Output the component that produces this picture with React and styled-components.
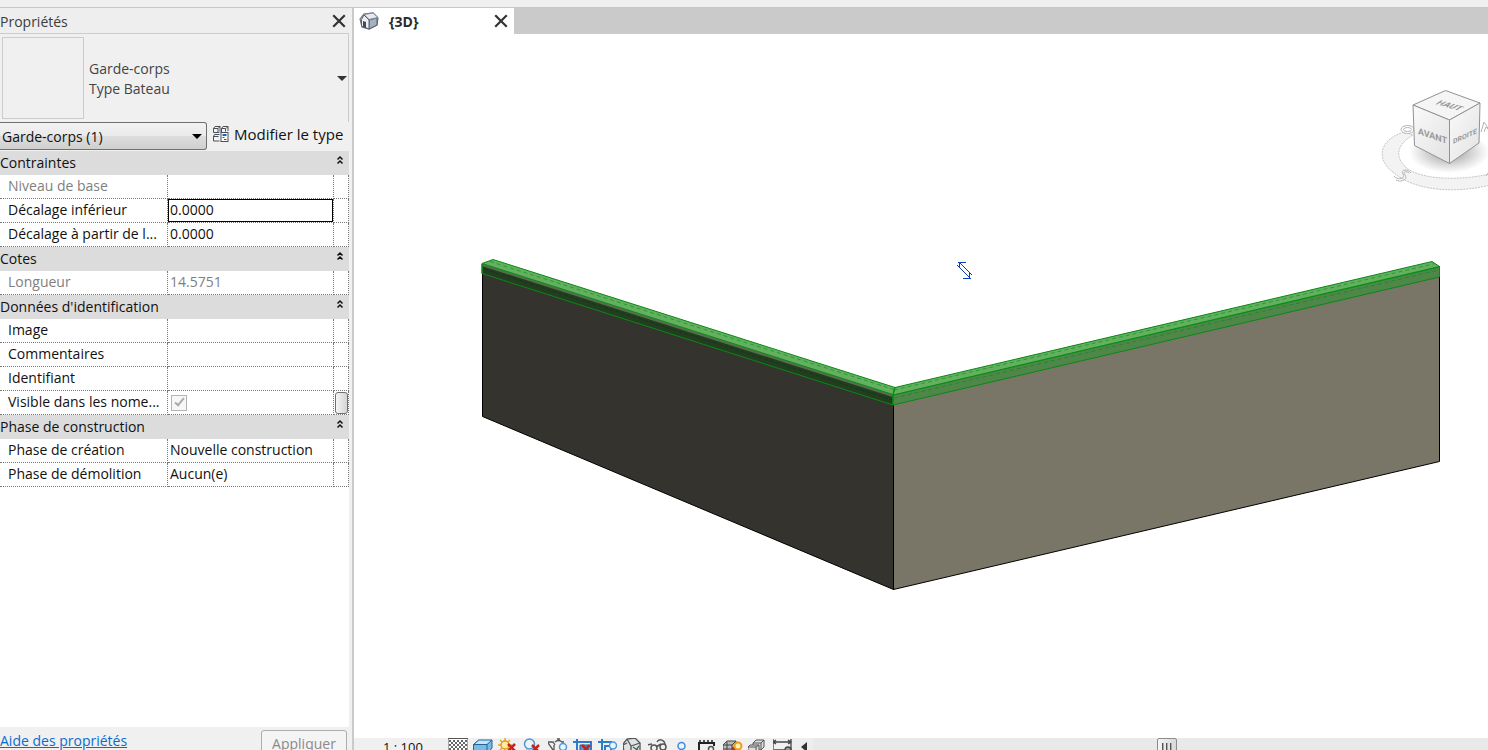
import React from "react";
import styled, { createGlobalStyle } from "styled-components";

const Global = createGlobalStyle`
  *, *::before, *::after { box-sizing: border-box; }
  html, body { margin: 0; height: 100%; overflow: hidden; }
  body { font: 14px/20px "Open Sans", "Noto Sans", sans-serif; color: #111; background: #fff; }
  button, input, select { font: inherit; color: inherit; margin: 0; }
`;

const Shell = styled.div`
  display: flex;
  flex-direction: column;
  height: 100vh;
  overflow: hidden;
`;
const TopStrip = styled.div`
  flex: none;
  height: 8px;
  background: #efefef;
  border-bottom: 1px solid #c8c8c8;
`;
const Workspace = styled.div`
  flex: 1;
  min-height: 0;
  display: flex;
`;

const Panel = styled.aside`
  flex: 0 0 354px;
  display: flex;
  flex-direction: column;
  min-height: 0;
  padding-right: 3px;
  background: #f0f0f0;
  border-right: 2px solid #cacaca;
`;
const PanelHeader = styled.header`
  flex: none;
  display: flex;
  align-items: center;
  justify-content: space-between;
  height: 26px;
  padding-right: 3px;
  background: #eeeeee;
  border-bottom: 1px solid #cccccc;
`;
const PanelTitle = styled.h2`
  margin: 0;
  padding-top: 2px;
  font-size: 14px;
  font-weight: 400;
  color: #3c3c3c;
`;
const IconButton = styled.button`
  display: flex;
  padding: 0;
  border: 0;
  background: none;
`;

const TypeSelector = styled.button`
  flex: none;
  display: flex;
  align-items: center;
  height: 88px;
  padding: 0 1px 0 2px;
  border: 0;
  border-right: 1px solid #cccccc;
  background: #f0f0f0;
  color: #444444;
  text-align: left;
`;
const Thumbnail = styled.span`
  width: 82px;
  height: 82px;
  border: 1px solid #cccccc;
`;
const TypeName = styled.span`
  flex: 1;
  padding: 2px 0 0 5px;
`;
const Caret = styled.span`
  border: 5px solid transparent;
  border-top-color: ${(p) => p.$color || "#333"};
  border-bottom: 0;
`;

const FilterRow = styled.div`
  flex: none;
  display: flex;
  align-items: flex-start;
  height: 29px;
  gap: 5px;
`;
const SelectWrap = styled.div`
  position: relative;
  width: 207px;
  height: 28px;
`;
const Select = styled.select`
  appearance: none;
  width: 100%;
  height: 28px;
  padding: 1px 20px 0 2px;
  border: 1px solid #707070;
  border-left: 0;
  border-radius: 0 3px 3px 0;
  background: linear-gradient(#f2f2f2 0, #ebebeb 48%, #dddddd 52%, #cfcfcf 100%);
`;
const SelectCaret = styled(Caret)`
  position: absolute;
  right: 5px;
  top: 12px;
  pointer-events: none;
`;
const EditType = styled.button`
  display: flex;
  align-items: center;
  gap: 4px;
  height: 24px;
  padding: 0;
  border: 0;
  background: none;
  font-size: 15px;
  white-space: nowrap;
`;

const GridArea = styled.div`
  flex: 1;
  min-height: 0;
  background: #fff;
  overflow: hidden;
`;
const PropTable = styled.table`
  width: 100%;
  table-layout: fixed;
  border-collapse: separate;
  border-spacing: 0;
`;
const SectionCell = styled.th`
  height: 24px;
  padding: 0;
  background: #dcdcdc;
  font-weight: 400;
`;
const SectionButton = styled.button`
  display: flex;
  align-items: center;
  justify-content: space-between;
  width: 100%;
  height: 24px;
  padding: 0 5px 0 0;
  border: 0;
  background: none;
`;
const LabelCell = styled.th`
  height: 24px;
  padding: 0 0 2px 8px;
  border: 1px dotted #777;
  border-width: 0 1px 1px 0;
  font-weight: 400;
  text-align: left;
  white-space: nowrap;
  overflow: hidden;
  color: ${(p) => (p.$dim ? "#808080" : "#111")};
`;
const ValueCell = styled.td`
  height: 24px;
  padding: 0;
  border: 1px dotted #777;
  border-width: 0 1px 1px 0;
`;
const ValueInput = styled.input`
  display: block;
  width: 100%;
  height: 23px;
  padding: 0 0 2px 1px;
  border: 1px solid ${(p) => (p.$active ? "#000" : "transparent")};
  background: #fff;
  outline: 0;
  &:disabled { color: #808080; }
`;
const Tick = styled.input`
  appearance: none;
  display: grid;
  place-items: center;
  width: 16px;
  height: 16px;
  margin: 0 0 0 3px;
  border: 1px solid #b4b4b4;
  background: #f7f7f7;
  &::before {
    content: "";
    width: 5px;
    height: 10px;
    margin-bottom: 3px;
    border: solid #aaaaaa;
    border-width: 0 2px 2px 0;
    transform: rotate(40deg);
  }
`;
const AssociateButton = styled.button`
  display: block;
  width: 13px;
  height: 22px;
  margin-left: 1px;
  padding: 0;
  border: 1px solid #707070;
  border-radius: 3px;
  background: linear-gradient(90deg, #f6f6f6, #d4d4d4);
`;

const PanelFooter = styled.footer`
  flex: none;
  display: flex;
  align-items: flex-start;
  justify-content: space-between;
  height: 23px;
  padding: 3px 2px 0 0;
  overflow: hidden;
`;
const HelpLink = styled.a`
  padding-top: 1px;
  color: #0b6cce;
`;
const ApplyButton = styled.button`
  width: 86px;
  height: 27px;
  flex: none;
  padding: 0;
  border: 1px solid #adadad;
  border-radius: 3px;
  background: #f4f4f4;
  color: #8a8a8a;
`;

const View = styled.main`
  flex: 1;
  min-width: 0;
  display: flex;
  flex-direction: column;
`;
const TabBar = styled.div`
  flex: none;
  display: flex;
  height: 26px;
  background: #cacaca;
`;
const Tab = styled.div`
  display: flex;
  align-items: center;
  width: 160px;
  padding: 0 6px 0 5px;
  background: #fff;
`;
const TabName = styled.strong`
  flex: 1;
  padding: 1px 0 0 10px;
  color: #2b2b2b;
`;
const Canvas = styled.div`
  flex: 1;
  min-height: 0;
  overflow: hidden;
  background: #fff;
`;
const Scene = styled.svg`
  display: block;
  width: 100%;
  height: auto;
`;

const ControlBar = styled.div`
  flex: none;
  display: flex;
  align-items: flex-start;
  height: 12px;
  overflow: hidden;
  background: #f0f0f0;
`;
const Scale = styled.button`
  width: 94px;
  padding: 0 0 0 29px;
  border: 0;
  background: none;
  font-size: 13px;
  line-height: 18px;
  text-align: left;
`;
const Tools = styled.div`
  display: flex;
  gap: 5px;
`;
const ScrollTrack = styled.div`
  flex: 1;
  display: flex;
  height: 20px;
  background: #e9e9e9;
`;
const ScrollArrow = styled.button`
  flex: none;
  display: flex;
  align-items: flex-start;
  width: 20px;
  height: 20px;
  padding: 4px 0 0 8px;
  border: 0;
  background: #eeeeee;
`;
const ScrollRail = styled.div`
  flex: 1;
  display: flex;
  justify-content: center;
  padding-left: 32px;
`;
const ScrollThumb = styled.button`
  display: flex;
  gap: 2px;
  width: 20px;
  height: 18px;
  padding: 4px 4px 0;
  border: 1px solid #8c8c8c;
  border-radius: 2px;
  background: linear-gradient(90deg, #f5f5f5, #d8d8d8);
`;
const Grip = styled.span`
  width: 2px;
  height: 9px;
  background: linear-gradient(90deg, #555 50%, #aaa 50%);
`;

const Cross = () => (
  <svg width="14" height="14" viewBox="0 0 14 14">
    <path d="M2 2l10 10M12 2L2 12" stroke="#333" strokeWidth="2.200" strokeLinecap="square" fill="none" />
  </svg>
);
const ChevronMark = styled.svg`
  margin-bottom: 6px;
`;
const Chevrons = () => (
  <ChevronMark width="8" height="10" viewBox="0 0 8 10">
    <path d="M1.500 4.500L4 2l2.500 2.500M1.500 8.500L4 6l2.500 2.500" stroke="#111" strokeWidth="1.500" fill="none" />
  </ChevronMark>
);
const HouseIcon = () => (
  <svg width="20" height="20" viewBox="0 0 20 20">
    <path d="M1 8l4-5 9-1 5 5-1 7-8 4-7-2z" fill="#d8dde5" stroke="#667080" strokeWidth="1.200" />
    <path d="M10 9l8-2v7l-8 4z" fill="#a7b1bf" stroke="#56606e" />
    <path d="M5 3.500l5 5 9-2-5-4.500z" fill="#e6eaef" stroke="#7c8795" />
    <path d="M2.500 8.500L5 4l5 5v9l-7.500-3z" fill="#eef0f3" stroke="#56606e" />
    <path d="M4 10l3 1v6l-3-1z" fill="#3f4b5c" />
  </svg>
);
const EditTypeIcon = () => (
  <svg width="18" height="18" viewBox="0 0 18 18" fill="none" stroke="#4a5058">
    <path d="M1.500 3.500l1.500-2h5v5l-1 1h-5.500zM9.500 7V3.500l1.500-2h5V6M1.500 11.500l1-2h5M1.500 11v5h6" fill="#f4f4f4" />
    <path d="M1.500 3.500h4.500v4M9.500 3.500h4v3M1.500 11.500h5M16 1.500l-2 2M8 1.500l-2 2" />
    <rect x="9" y="7.500" width="7" height="9" fill="#fff" />
    <path d="M10.500 10h4" stroke="#1765b5" strokeWidth="2" />
    <path d="M10.500 12.500h2M12 14.500h2.500" stroke="#1765b5" />
  </svg>
);

const blue = "#2b7cc9";
const toolIcons = [
  ["Niveau de détail", <g key="a"><path d="M0 .5h20v15H0z" fill="#fff" stroke="#555" /><path d="M1 3h18M1 7h18M1 11h18" stroke="#666" strokeWidth="2" strokeDasharray="2 2" /><path d="M3 5h16M3 9h16M3 13h16" stroke="#666" strokeWidth="2" strokeDasharray="2 2" /></g>],
  ["Style visuel", <g key="b" stroke="#27618f"><path d="M.5 6.500l5-4.500h13.500v8l-5 6H.5z" fill="#77bce8" /><path d="M.5 6.500h13.500l5-4.500M14 6.500v10" fill="none" /><path d="M2.500 6l3.500-3.300h11.500l-4 3.300z" fill="#c5e5f8" stroke="none" /></g>],
  ["Trajectoire du soleil", <g key="c"><path d="M7 0v14M0 7h14M2 2l10 10M12 2L2 12" stroke="#e5a72c" strokeWidth="1.500" /><circle cx="7" cy="7" r="4" fill="#ffe9a0" stroke="#e09b22" strokeWidth="1.500" /><path d="M10 6l7 7M17 6l-7 7" stroke="#c92020" strokeWidth="2.500" /></g>],
  ["Ombres", <g key="d"><path d="M3 12c3 3 9 1 9-3" stroke="#777" strokeWidth="2" fill="none" /><circle cx="6.500" cy="6" r="5" fill="#e8f3fc" stroke="#5096cf" strokeWidth="1.500" /><path d="M9 7l7 7M16 7l-7 7" stroke="#c92020" strokeWidth="2.500" /></g>],
  ["Rendu", <g key="e" fill="none"><path d="M-1 4h6l2 3M7 4c2-2 5-2 7 0l2 0M0 5l5 7M9 1h3M6 7v8h9" stroke="#555" strokeWidth="1.300" /><circle cx="15" cy="9" r="3.500" fill="#eaf5ff" stroke="#4a9ade" strokeWidth="1.500" /></g>],
  ["Cadrer la vue", <g key="f" fill="none"><path d="M4 1v14M0 4h18v11" stroke={blue} strokeWidth="2" /><path d="M7 7h9v7H7z" fill="#4b9de0" stroke="#185b9b" /><path d="M9 7l8 8M17 7l-8 8" stroke="#c92020" strokeWidth="2.500" /></g>],
  ["Zone cadrée", <g key="g" fill="none"><path d="M4 1v14M0 4h13v11M7 15V8h5" stroke={blue} strokeWidth="2" /><circle cx="15" cy="7.500" r="3.500" fill="#eaf5ff" stroke="#4a9ade" strokeWidth="1.500" /></g>],
  ["Vue 3D verrouillée", <g key="h" fill="none" stroke="#555" strokeWidth="1.300"><path d="M0 6l4-5 8-1 5 5v10H1z" fill="#e0e3e6" /><path d="M4 1l4 7 9-3M8 8v8M0 7l4-2" /><path d="M10 9l6 4M16 8l-5 7" stroke="#3a6c57" /></g>],
  ["Masquer temporairement", <g key="i" fill="none" stroke="#555" strokeWidth="1.500"><path d="M-1 7l5-1M9 4c2-4 8-2 8 3M8 9l5-3" /><circle cx="6" cy="10" r="3" /><circle cx="15" cy="9" r="3" /></g>],
  ["Afficher les éléments cachés", <g key="j"><circle cx="8.500" cy="8" r="3.500" fill="#eaf5ff" stroke="#3e8bd8" strokeWidth="1.500" /><path d="M6.500 12h4v4h-4z" fill="#777" /></g>],
  ["Propriétés temporaires", <g key="k" fill="none" stroke="#222" strokeWidth="1.500"><path d="M0 5h16v3M1 4v12" strokeWidth="2" /><path d="M1 3h2M5 3h2M9 3h2M13 3h2" /><circle cx="13" cy="11" r="2.500" stroke="#555" /></g>],
  ["Modèle analytique", <g key="l"><path d="M0 7l4-4h9v12H0z" fill="#bbb" stroke="#444" /><path d="M0 7h9v8M4 4v11M9 7l4-4M0 11h12" stroke="#444" fill="none" /><path d="M9 9h4v6H9z" fill="#a33" /><circle cx="15" cy="8" r="3.500" fill="#fff2b2" stroke="#f19a1b" strokeWidth="2" /></g>],
  ["Jeux de déplacement", <g key="m" fill="#ddd" stroke="#555"><path d="M5 5l3-3h8v7l-3 3H5z" /><path d="M5 5h8v7M13 5l3-3" fill="none" /><path d="M0 9l2-2h9v8H0z" /><path d="M0 9h8v6M8 9l3-2" fill="none" /></g>],
  ["Contraintes", <g key="n" fill="none" stroke="#444" strokeWidth="1.300"><path d="M0 1v15M18 1v11M0 4h18M3 2L0 4l3 2M15 2l3 2-3 2M1 12h12" /><circle cx="15" cy="12" r="3" fill="#999" /></g>],
];

const sections = [
  { title: "Contraintes", rows: [
    { id: "niveau", label: "Niveau de base", value: "", dim: true },
    { id: "dec-inf", label: "Décalage inférieur", value: "0.0000", active: true },
    { id: "dec-part", label: "Décalage à partir de l...", value: "0.0000" },
  ] },
  { title: "Cotes", rows: [{ id: "longueur", label: "Longueur", value: "14.5751", dim: true }] },
  { title: "Données d'identification", rows: [
    { id: "image", label: "Image", value: "" },
    { id: "comm", label: "Commentaires", value: "" },
    { id: "ident", label: "Identifiant", value: "" },
    { id: "visible", label: "Visible dans les nome...", check: true },
  ] },
  { title: "Phase de construction", rows: [
    { id: "creation", label: "Phase de création", value: "Nouvelle construction" },
    { id: "demol", label: "Phase de démolition", value: "Aucun(e)" },
  ] },
];

const LabelCol = styled.col`
  width: 168px;
`;
const ActionCol = styled.col`
  width: 15px;
`;

function Property({ row }) {
  return (
    <tr>
      <LabelCell scope="row" $dim={row.dim}><label htmlFor={row.id}>{row.label}</label></LabelCell>
      <ValueCell>
        {row.check
          ? <Tick id={row.id} type="checkbox" defaultChecked disabled />
          : <ValueInput id={row.id} type="text" defaultValue={row.value} disabled={row.dim} $active={row.active} />}
      </ValueCell>
      <ValueCell>{row.check && <AssociateButton aria-label="Associer" />}</ValueCell>
    </tr>
  );
}

function PropertiesPanel() {
  return (
    <Panel>
      <PanelHeader>
        <PanelTitle>Propriétés</PanelTitle>
        <IconButton aria-label="Fermer"><Cross /></IconButton>
      </PanelHeader>
      <TypeSelector>
        <Thumbnail />
        <TypeName>Garde-corps<br />Type Bateau</TypeName>
        <Caret />
      </TypeSelector>
      <FilterRow>
        <SelectWrap>
          <Select aria-label="Filtre"><option>Garde-corps (1)</option></Select>
          <SelectCaret $color="#000" />
        </SelectWrap>
        <EditType><EditTypeIcon />Modifier le type</EditType>
      </FilterRow>
      <GridArea>
        <PropTable>
          <colgroup><LabelCol /><col /><ActionCol /></colgroup>
          {sections.map((s) => (
            <tbody key={s.title}>
              <tr><SectionCell colSpan={3}><SectionButton>{s.title}<Chevrons /></SectionButton></SectionCell></tr>
              {s.rows.map((r) => <Property key={r.id} row={r} />)}
            </tbody>
          ))}
        </PropTable>
      </GridArea>
      <PanelFooter>
        <HelpLink href="#aide">Aide des propriétés</HelpLink>
        <ApplyButton disabled>Appliquer</ApplyButton>
      </PanelFooter>
    </Panel>
  );
}

const Walls = () => (
  <g>
    <path d="M482.500 270L893.500 400V589.500L482.500 416.500z" fill="#35332d" stroke="#000" />
    <path d="M893.500 400L1439.500 272V461.500L893.500 589.500z" fill="#797567" stroke="#000" />
  </g>
);
const Rail = () => (
  <g stroke="#078a12" strokeLinejoin="round">
    <path d="M482 264L893 395V405L482 273.500z" fill="#233d20" />
    <path d="M482 263.500L493 259.500L895 387.500L893 394.500z" fill="#63b060" />
    <path d="M482 265L893 396" stroke="#54704b" strokeWidth="2" />
    <path d="M484 269L893 400" stroke="#1b331a" strokeDasharray="4 2" />
    <path d="M893 395L1439.500 267V277L893 405z" fill="#4e8749" />
    <path d="M895 387.500L1432 261.500L1439.500 266.500L893 395z" fill="#63b060" />
    <path d="M490 261.500L894 389.500M894 390L1435 263.500M894 398L1439 270" fill="none" strokeDasharray="4 3" strokeOpacity=".6" />
    <path d="M482 263.500V273.500M895 387.500L893 395V405M1439.500 266V277" fill="none" />
  </g>
);
const Cursor = () => (
  <g stroke="#0b3fb5" fill="none" shapeRendering="crispEdges">
    <path d="M958 262.500h8M963 278.500h8M959.500 263v5M969.500 273v5" />
    <path d="M960 263l12 12M957 265l13 13" />
  </g>
);
const ViewCube = () => (
  <g fontFamily="Roboto, 'Liberation Sans', sans-serif" fontWeight="700" fill="#999">
    <defs>
      <radialGradient id="shade">
        <stop offset="0" stopColor="#888" stopOpacity=".9" />
        <stop offset="1" stopColor="#999" stopOpacity="0" />
      </radialGradient>
      <linearGradient id="face" x1="0" y1="0" x2="1" y2="1">
        <stop offset="0" stopColor="#fafafa" /><stop offset="1" stopColor="#e2e2e2" />
      </linearGradient>
    </defs>
    <path d="M1404 132C1378 140 1376 160 1394 173C1418 193 1462 193 1494 184V173C1462 181 1424 180 1408 169C1394 158 1396 145 1413 135z" fill="#f3f3f3" stroke="#c4c4c4" strokeDasharray="2 1" />
    <ellipse cx="1449" cy="152" rx="40" ry="21" fill="url(#shade)" />
    <g fill="#fff" stroke="#b5b5b5" fontWeight="400">
      <ellipse cx="1407.500" cy="129.500" rx="6.500" ry="4" />
      <ellipse cx="1407.500" cy="129.500" rx="4" ry="2" />
      <path d="M1394 176c4 5 12 2 9-2s4-6 8-1M1396 180c6 3 12-1 9-5s2-4 4-2" fill="none" />
      <path d="M1481 132l3-10 4 6M1484 132l2-5 2 2M1486 176l2-3" fill="none" />
    </g>
    <g stroke="#929292" strokeWidth="1" strokeLinejoin="round">
      <path d="M1413 105L1445.500 90.500L1480 103L1449.500 120z" fill="#f5f5f5" />
      <path d="M1413 105L1449.500 120V163.500L1414.500 145.500z" fill="url(#face)" />
      <path d="M1480 103L1449.500 120V163.500L1479 143z" fill="url(#face)" />
    </g>
    <text transform="translate(1418 134) skewY(19)" fontSize="9">AVANT</text>
    <text transform="translate(1453 144) skewY(-24)" fontSize="7">DROITE</text>
    <text transform="matrix(1 .28 -.9 .6 1435 104)" fontSize="9">HAUT</text>
  </g>
);

function ModelView() {
  return (
    <View>
      <TabBar>
        <Tab>
          <HouseIcon />
          <TabName>{"{3D}"}</TabName>
          <IconButton aria-label="Fermer la vue"><Cross /></IconButton>
        </Tab>
      </TabBar>
      <Canvas>
        <Scene viewBox="354 34 1134 704" role="img" aria-label="Vue 3D">
          <Walls />
          <Rail />
          <Cursor />
          <ViewCube />
        </Scene>
      </Canvas>
      <ControlBar>
        <Scale>1 : 100</Scale>
        <Tools>
          {toolIcons.map(([name, art]) => (
            <IconButton key={name} aria-label={name}>
              <svg width="20" height="20" viewBox="0 0 20 20">{art}</svg>
            </IconButton>
          ))}
        </Tools>
        <ScrollTrack>
          <ScrollArrow aria-label="Défiler à gauche">
            <svg width="6" height="10" viewBox="0 0 6 10"><path d="M6 0v10L0 5z" fill="#333" /></svg>
          </ScrollArrow>
          <ScrollRail><ScrollThumb aria-label="Défilement"><Grip /><Grip /><Grip /></ScrollThumb></ScrollRail>
        </ScrollTrack>
      </ControlBar>
    </View>
  );
}

export default function App() {
  return (
    <>
      <Global />
      <Shell>
        <TopStrip />
        <Workspace>
          <PropertiesPanel />
          <ModelView />
        </Workspace>
      </Shell>
    </>
  );
}
